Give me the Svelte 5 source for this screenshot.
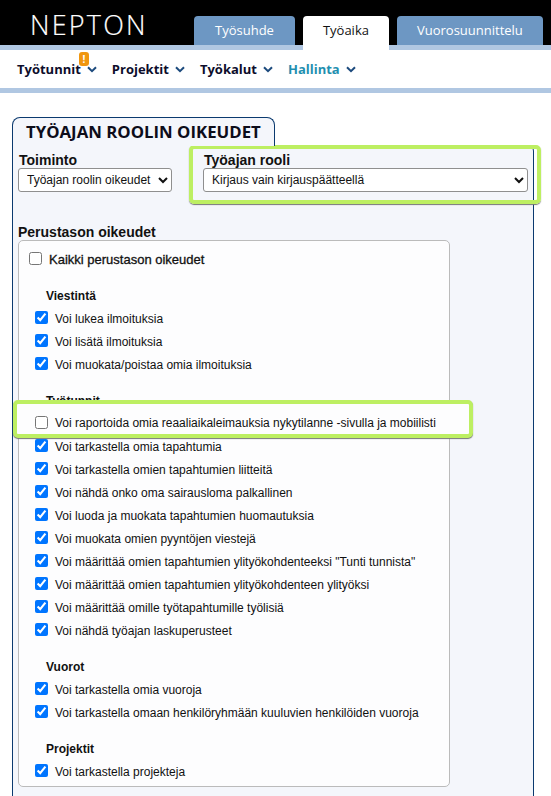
<script>
  const tabs = [
    { label: 'Työsuhde' },
    { label: 'Työaika', active: true },
    { label: 'Vuorosuunnittelu' }
  ];
  const menu = [
    { label: 'Työtunnit', badge: true },
    { label: 'Projektit' },
    { label: 'Työkalut' },
    { label: 'Hallinta', current: true }
  ];
  const groups = [
    { title: 'Viestintä', rows: [
      { t: 'Voi lukea ilmoituksia', on: true },
      { t: 'Voi lisätä ilmoituksia', on: true },
      { t: 'Voi muokata/poistaa omia ilmoituksia', on: true }
    ] },
    { title: 'Työtunnit', rows: [
      { t: 'Voi raportoida omia reaaliaikaleimauksia nykytilanne -sivulla ja mobiilisti', on: false, hl: true },
      { t: 'Voi tarkastella omia tapahtumia', on: true },
      { t: 'Voi tarkastella omien tapahtumien liitteitä', on: true },
      { t: 'Voi nähdä onko oma sairausloma palkallinen', on: true },
      { t: 'Voi luoda ja muokata tapahtumien huomautuksia', on: true },
      { t: 'Voi muokata omien pyyntöjen viestejä', on: true },
      { t: 'Voi määrittää omien tapahtumien ylityökohdenteeksi "Tunti tunnista"', on: true },
      { t: 'Voi määrittää omien tapahtumien ylityökohdenteen ylityöksi', on: true },
      { t: 'Voi määrittää omille työtapahtumille työlisiä', on: true },
      { t: 'Voi nähdä työajan laskuperusteet', on: true }
    ] },
    { title: 'Vuorot', rows: [
      { t: 'Voi tarkastella omia vuoroja', on: true },
      { t: 'Voi tarkastella omaan henkilöryhmään kuuluvien henkilöiden vuoroja', on: true }
    ] },
    { title: 'Projektit', rows: [
      { t: 'Voi tarkastella projekteja', on: true }
    ] }
  ];
</script>

<div class="page">
  <header class="top">
    <div class="logo">NEPTON</div>
    <nav class="tabs">
      {#each tabs as tab}
        <div class="tab" class:active={tab.active}>{tab.label}</div>
      {/each}
    </nav>
  </header>
  <div class="strip"></div>
  <nav class="menu">
    {#each menu as m}
      <div class="item" class:current={m.current}>
        {m.label}
        {#if m.badge}<span class="badge">!</span>{/if}
        <svg class="chev" width="10" height="7" viewBox="0 0 10 7"><path d="M1 1.2 5 5.2 9 1.2" fill="none" stroke="#1c4a7d" stroke-width="2"/></svg>
      </div>
    {/each}
  </nav>
  <div class="strip"></div>

  <main class="content">
    <h1 class="cap">TYÖAJAN ROOLIN OIKEUDET</h1>
    <section class="panel">
      <div class="fields">
        <div class="field">
          <label for="toiminto">Toiminto</label>
          <select id="toiminto" class="sel-a"><option>Työajan roolin oikeudet</option></select>
        </div>
        <div class="field role">
          <label for="rooli">Työajan rooli</label>
          <select id="rooli" class="sel-b"><option>Kirjaus vain kirjauspäätteellä</option></select>
        </div>
      </div>

      <h2 class="legend">Perustason oikeudet</h2>
      <div class="box">
        <label class="all"><input type="checkbox" /> <span>Kaikki perustason oikeudet</span></label>
        {#each groups as g}
          <h3 class="group">{g.title}</h3>
          {#each g.rows as r}
            <label class="row" class:hl={r.hl}><input type="checkbox" checked={r.on} /> <span>{r.t}</span></label>
          {/each}
        {/each}
      </div>
    </section>
  </main>
</div>

<style>
  :global(body) { margin: 0; background: #fff; }
  .page { width: 551px; height: 796px; overflow: hidden; font-family: "Liberation Sans", Arial, sans-serif; color: #111; }

  .top { height: 45px; background: #000; display: flex; align-items: flex-end; }
  .logo { width: 194px; box-sizing: border-box; padding: 0 0 5px 30px; color: #fff; font: 300 27px/30px "Open Sans", sans-serif; letter-spacing: 2.2px; -webkit-text-stroke: 0.2px #fff; }
  .tabs { display: flex; gap: 8px; }
  .tab { height: 29px; padding: 0 21px; background: #6d97c3; color: #fff; border-radius: 4px 4px 0 0; font: 13px/29px "Open Sans", sans-serif; }
  .tab:last-child { padding: 0 20px; }
  .tab.active { background: #fff; color: #111; height: 34px; margin-bottom: -5px; padding: 0 20px; position: relative; }

  .strip { height: 5px; background: #b0c7e2; }

  .menu { height: 38px; display: flex; align-items: center; gap: 15px; padding-left: 17px; }
  .item { position: relative; display: flex; align-items: center; gap: 6px; font: 700 13px "Open Sans", sans-serif; color: #0d0d2b; }
  .item.current { color: #1f8fb0; }
  .badge { position: absolute; left: 62px; top: -8px; width: 10px; height: 14px; border-radius: 3px; background: #f0960f; color: #fff; font: 700 10px/14px "Open Sans", sans-serif; text-align: center; }

  .content { padding: 24px 17px 0 12px; }
  .cap { display: inline-block; margin: 0 0 -1px; padding: 0 13px; height: 28px; position: relative; z-index: 1; background: #f4f6fb; border: 1px solid #0b3a6f; border-bottom: 0; border-radius: 8px 8px 0 0; font: 700 16.8px/28px "Open Sans", sans-serif; color: #0d0d1a; }
  .panel { border: 1px solid #0b3a6f; border-radius: 0 6px 0 0; background: #f4f6fb; padding: 0 0 40px 5px; height: 700px; }

  .fields { display: flex; align-items: flex-start; height: 78px; }
  .field { display: flex; flex-direction: column; padding-top: 7px; }
  .field label { font: 700 14px/15px "Liberation Sans", sans-serif; margin-left: 1px; }
  .field select { height: 24px; margin-top: 0; border: 1px solid #8f8f8f; border-radius: 3px; background: #fff; font: 12px "Liberation Sans", sans-serif; color: #111; padding-left: 4px; }
  .sel-a { width: 154px; }
  .sel-b { width: 325px; }
  .role { margin: -1px -8px 0 17px; width: 352px; height: 59px; box-sizing: border-box; padding: 4px 0 0 10px; border: 4px solid #bdef62; border-radius: 5px; box-shadow: 0 1px 1px #777; position: relative; }

  .legend { margin: 0; font: 700 14px/16px "Liberation Sans", sans-serif; }
  .box { width: 432px; height: 547px; box-sizing: border-box; background: #fdfdfe; border: 1px solid #bbb; border-radius: 5px; padding-top: 8px; position: relative; }
  .box input { margin: 0 0 2px; width: 13px; height: 13px; flex: none; }
  .all { display: flex; align-items: center; gap: 7px; height: 22px; box-sizing: border-box; padding: 0 0 2px 10px; font-size: 13px; -webkit-text-stroke: 0.3px #111; }
  .group { margin: 16px 0 0 27px; height: 20px; font: 700 12px/18px "Liberation Sans", sans-serif; }
  .row { display: flex; align-items: center; gap: 7px; height: 23px; padding-left: 16px; font-size: 12px; }
  .row.hl { position: relative; margin: -12px -24px -3px -6px; padding: 8px 0 0 18px; height: 38px; box-sizing: border-box; border: 4px solid #bdef62; border-radius: 5px; background: #fdfdfe; box-shadow: 0 1px 1px #777; }
</style>
